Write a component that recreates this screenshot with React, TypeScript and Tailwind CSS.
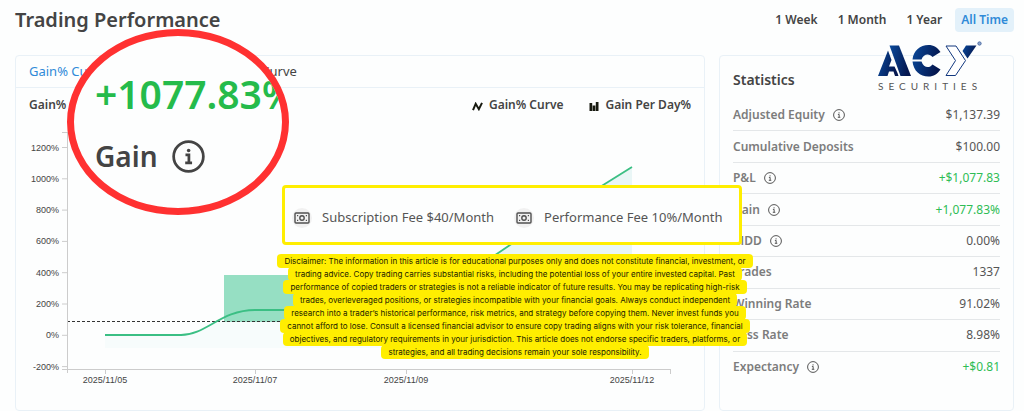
import React from "react";

const ranges = ["1 Week", "1 Month", "1 Year", "All Time"];

const stats = [
  { label: "Adjusted Equity", value: "$1,137.39", info: true, gain: false },
  { label: "Cumulative Deposits", value: "$100.00", info: false, gain: false },
  { label: "P&L", value: "+$1,077.83", info: true, gain: true },
  { label: "Gain", value: "+1,077.83%", info: true, gain: true },
  { label: "MDD", value: "0.00%", info: true, gain: false },
  { label: "Trades", value: "1337", info: false, gain: false },
  { label: "Winning Rate", value: "91.02%", info: false, gain: false },
  { label: "Loss Rate", value: "8.98%", info: false, gain: false },
  { label: "Expectancy", value: "+$0.81", info: true, gain: true },
];

const yTicks = ["1200%", "1000%", "800%", "600%", "400%", "200%", "0%", "-200%"];

const xTicks = [
  { x: 89, label: "2025/11/05" },
  { x: 239, label: "2025/11/07" },
  { x: 390, label: "2025/11/09" },
  { x: 616, label: "2025/11/12" },
];

const disclaimer = [
  "Disclaimer: The information in this article is for educational purposes only and does not constitute financial, investment, or",
  "trading advice. Copy trading carries substantial risks, including the potential loss of your entire invested capital. Past",
  "performance of copied traders or strategies is not a reliable indicator of future results. You may be replicating high-risk",
  "trades, overleveraged positions, or strategies incompatible with your financial goals. Always conduct independent",
  "research into a trader’s historical performance, risk metrics, and strategy before copying them. Never invest funds you",
  "cannot afford to lose. Consult a licensed financial advisor to ensure copy trading aligns with your risk tolerance, financial",
  "objectives, and regulatory requirements in your jurisdiction. This article does not endorse specific traders, platforms, or",
  "strategies, and all trading decisions remain your sole responsibility.",
];

function InfoIcon({ className }: { className: string }) {
  return (
    <svg viewBox="0 0 24 24" fill="none" stroke="currentColor" strokeWidth="2" className={className} aria-hidden="true">
      <circle cx="12" cy="12" r="10.8" />
      <path d="M9.8 10.8h2.5v5.6M9.6 16.6h5" />
      <circle cx="12.1" cy="7.6" r="1.3" fill="currentColor" stroke="none" />
    </svg>
  );
}

function MoneyIcon() {
  return (
    <span className="flex size-5 shrink-0 items-center justify-center rounded-full bg-[#f1f1f1] text-[#505050]">
      <svg viewBox="0 0 16 12" fill="none" stroke="currentColor" strokeWidth="1.4" className="h-3 w-4" aria-hidden="true">
        <rect x="1" y="1" width="14" height="10" rx="1" />
        <circle cx="8" cy="6" r="2.2" />
        <path d="M3 3.6h1.2M11.8 3.6H13M3 8.4h1.2M11.8 8.4H13" />
      </svg>
    </span>
  );
}

function Logo() {
  return (
    <div className="text-[#555]">
      <svg viewBox="0 0 108 38" className="block h-[38px] w-[108px]" role="img" aria-label="ACY">
        <defs>
          <linearGradient id="navy" x1="0" y1="0" x2="1" y2="0.3">
            <stop offset="0" stopColor="#0a4a9c" />
            <stop offset="1" stopColor="#04174f" />
          </linearGradient>
        </defs>
        <path fill="url(#navy)" d="M11.5 5.500H21L33 36H22.500Z" />
        <path fill="url(#navy)" d="M0 36L10 10.500L13.500 20L11 26.500H16.500L19.500 33L20.500 36H17L15.500 31.500H11L9.500 36Z" />
        <path fill="url(#navy)" d="M34.500 19.500C35.500 10.500 42 5 50.500 5C55.500 5 59.500 7.500 62.500 12L54.500 17C51.500 13 45.500 13.500 43.500 19.500ZM34.500 21.500H43.500C45.500 28 51.500 28.500 54.500 24.500L62.500 29.500C59.500 34 55.500 36.500 50.500 36.500C42 36.500 35.500 31 34.500 21.500Z" />
        <path fill="#fff" stroke="#12387f" d="M68 6H78L87.500 20.600L77.500 35.500H68L77.500 20.600Z" />
        <path fill="url(#navy)" d="M88 5.500H98.500L89.500 18.500L84.500 11Z" />
        <circle cx="101.500" cy="3.500" r="1.700" fill="#8fa6cc" stroke="#3f619c" strokeWidth=".8" />
      </svg>
      <p className="pt-[2px] font-['Lato',sans-serif] text-[10px] leading-3 tracking-[5px]">SECURITIES</p>
    </div>
  );
}

function Chart() {
  return (
    <svg viewBox="0 0 688 272" className="block w-full" role="img" aria-label="Gain percentage over time">
      <path d="M89 213H165C190 213 205 188 239 188H275C400 188 440 160 494 123L584 65L616 45V226H89Z" fill="#e9f6f7" opacity=".25" />
      <path d="M484 129L616 45V213H440Z" fill="#e9f6f6" />
      <rect x="208" y="153" width="90" height="47" fill="#96dfc3" />
      <path d="M51 199.500H600" stroke="#333" strokeDasharray="3 2" />
      <path d="M89 213H165C190 213 205 188 239 188H275C400 188 440 160 494 123L584 65L616 45" fill="none" stroke="#3bbf84" strokeWidth="1.800" />
      <path d="M51.500 10V251M46 247.500H654.500M654.500 247V252M46 10.500H51" fill="none" stroke="#ccc" />
      {yTicks.map((label, i) => (
        <g key={label}>
          <path d={`M46 ${25.5 + i * 31.3}H51`} stroke="#ccc" />
          <text x="43" y={28.5 + i * 31.3} textAnchor="end" className="fill-[#444] text-[9px]">{label}</text>
        </g>
      ))}
      {xTicks.map(({ x, label }) => (
        <g key={label}>
          <path d={`M${x}.5 247V252`} stroke="#ccc" />
          <text x={x} y="261" textAnchor="middle" className="fill-[#444] text-[9px]">{label}</text>
        </g>
      ))}
    </svg>
  );
}

export default function App() {
  return (
    <main className="relative bg-[#fdfefe] pr-[10px] pl-[15px] font-['Noto_Sans',sans-serif] text-[#444]">
      <header className="flex h-[55px] items-start justify-between pt-2">
        <h1 className="text-xl leading-6 font-semibold">Trading Performance</h1>
        <nav className="flex gap-1.5 text-xs font-semibold">
          {ranges.map((range) => (
            <button
              key={range}
              className={range === "All Time" ? "h-6 rounded-sm bg-[#e3f1fa] px-1.5 text-[#2f8ad8]" : "h-6 px-[7px]"}
            >
              {range}
            </button>
          ))}
        </nav>
      </header>

      <div className="flex gap-[14px]">
        <section className="min-w-0 flex-1 rounded border border-[#e9f1f7] pb-4">
          <div className="flex h-8 items-center gap-20 border-b border-[#e9f1f7] px-[13px] text-[13px]">
            <button className="text-[#2f8ad8]">Gain% Curve</button>
            <button className="w-[110px] text-right">Equity Curve</button>
          </div>
          <div className="flex h-[34px] items-center justify-between px-[13px] text-xs font-semibold">
            <h2>Gain%</h2>
            <div className="flex gap-[26px]">
              <button className="flex items-center gap-1.5">
                <svg viewBox="0 0 12 10" className="mt-0.5 h-[9px] w-[11px]" fill="none" stroke="#181a10" strokeWidth="2.2" aria-hidden="true">
                  <path d="M1 9L4 2L7.500 8L11 1" />
                </svg>
                Gain% Curve
              </button>
              <button className="flex items-center gap-1.5">
                <svg viewBox="0 0 10 10" className="mt-0.5 h-[9px] w-[10px]" fill="#181a10" aria-hidden="true">
                  <path d="M0 1H3V10H0ZM3.500 4H6.500V10H3.500ZM7 0H10V10H7Z" />
                </svg>
                Gain Per Day%
              </button>
            </div>
          </div>
          <div className="font-['Liberation_Sans',sans-serif]">
            <Chart />
          </div>
        </section>

        <section className="flex w-[295px] flex-col rounded border border-[#e9f1f7] px-[13px] pt-3 pb-[27px]">
          <h2 className="mb-2 text-sm leading-6 font-semibold">Statistics</h2>
          <dl className="grid flex-1 auto-rows-fr">
            {stats.map(({ label, value, info, gain }) => (
              <div key={label} className="flex items-center justify-between border-b border-[#e4e7e9] text-xs last:border-transparent">
                <dt className="flex items-center gap-2 font-semibold text-[#7c7c7c]">
                  {label}
                  {info && <InfoIcon className="size-3 text-[#555]" />}
                </dt>
                <dd className={gain ? "text-[#2fbd55]" : "text-[#555]"}>{value}</dd>
              </div>
            ))}
          </dl>
        </section>
      </div>

      <div className="absolute top-10 left-[878px]">
        <Logo />
      </div>

      <div className="absolute top-[185px] left-[282px] flex h-[60px] w-[460px] items-center gap-5 rounded border-[3px] border-[#ffee00] bg-[#fdfefe] pt-1.5 pl-[7px] text-[13px] whitespace-nowrap text-[#555]">
        <span className="flex items-center gap-2.5"><MoneyIcon />Subscription Fee $40/Month</span>
        <span className="flex items-center gap-2.5"><MoneyIcon />Performance Fee 10%/Month</span>
      </div>

      <p className="absolute top-[254px] left-[262px] flex w-[506px] flex-col items-center font-['Inter',sans-serif] text-[8px] leading-[14px] whitespace-nowrap text-[#222200]">
        {disclaimer.map((line) => (
          <span key={line} className="-mb-px rounded bg-[#ffee00] px-[7px]">{line}</span>
        ))}
      </p>

      <div className="absolute top-[29px] left-[67px] h-[186px] w-[222px] overflow-hidden rounded-[50%] border-[7px] border-[#ff3131] bg-[#fdfefe] pt-[33px] pl-[21px] font-semibold whitespace-nowrap">
        <p className="text-[39px] leading-[50px] text-[#25bb4b]">+1077.83%</p>
        <p className="mt-[18px] flex items-center gap-3.5 text-[28px] leading-[38px]">
          Gain
          <InfoIcon className="size-[33px]" />
        </p>
      </div>
    </main>
  );
}
